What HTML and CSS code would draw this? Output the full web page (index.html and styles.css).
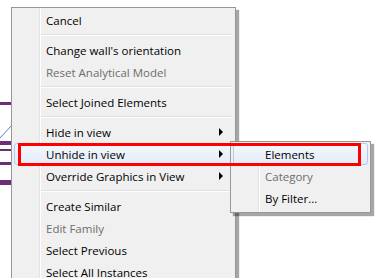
FILE: index.html
```html
<!DOCTYPE html>
<html lang="en">
  <head>
    <meta charset="utf-8" />
    <title>Context menu</title>
    <link rel="stylesheet" href="styles.css">
  </head>
  <body>
    <!-- drawing behind the menu -->
    <svg class="canvas" width="12" height="278" viewBox="0 0 12 278">
      <rect x="0" y="102" width="12" height="3" fill="#6e2d79" />
      <line x1="0" y1="138" x2="12" y2="125" stroke="#4a86d8" stroke-width="1" />
      <rect x="0" y="141" width="12" height="4" fill="#6e2d79" />
      <rect x="0" y="149" width="12" height="2" fill="#6e2d79" />
      <rect x="0" y="162" width="12" height="3" fill="#6e2d79" />
      <rect x="0" y="180" width="12" height="5" fill="#6e2d79" />
    </svg>

    <!-- main context menu -->
    <div class="menu main-menu">
      <div class="item">Cancel</div>
      <div class="sep"></div>
      <div class="item">Change wall's orientation</div>
      <div class="item disabled">Reset Analytical Model</div>
      <div class="sep"></div>
      <div class="item">Select Joined Elements</div>
      <div class="sep"></div>
      <div class="item">Hide in view <span class="arrow"></span></div>
      <div class="item active">Unhide in view <span class="arrow"></span></div>
      <div class="item">Override Graphics in View <span class="arrow"></span></div>
      <div class="sep"></div>
      <div class="item">Create Similar</div>
      <div class="item disabled">Edit Family</div>
      <div class="item">Select Previous</div>
      <div class="item">Select All Instances</div>
    </div>

    <!-- submenu for Unhide in view -->
    <div class="menu sub-menu">
      <div class="item active">Elements</div>
      <div class="item disabled">Category</div>
      <div class="item">By Filter...</div>
    </div>

    <!-- red annotation box -->
    <div class="mark"></div>
  </body>
</html>
```

FILE: styles.css
```css
* {
  box-sizing: border-box;
}

body {
  margin: 0;
  width: 385px;
  height: 278px;
  overflow: hidden;
  position: relative;
  background-color: white;
  font-family: 'Open Sans', sans-serif;
  font-size: 11.5px;
  color: black;
}

.canvas {
  position: absolute;
  left: 0;
  top: 0;
}

.menu {
  position: absolute;
  border: 1px solid #979797;
  padding: 1px 2px;
  /* gutter line for the icon column */
  background: linear-gradient(to right, #f0f0f0 27px, #e2e3e3 27px, #e2e3e3 28px, #ffffff 28px, #ffffff 29px, #f0f0f0 29px);
  background-color: #f0f0f0;
  box-shadow: 3px 3px 1px rgba(0, 0, 0, 0.35);
}

.main-menu {
  left: 11px;
  top: 7px;
  width: 225px;
}

.sub-menu {
  left: 230px;
  top: 141px;
  width: 141px;
  height: 72px;
}

.item {
  display: flex;
  align-items: center;
  height: 22px;
  padding-left: 31px;
  padding-right: 9px;
  border: 1px solid transparent;
  border-radius: 3px;
}

.item.disabled {
  color: #6d6d6d;
}

.item.active {
  border-color: #aeccf1;
  background: linear-gradient(to bottom, #f4f8fd, #e3ecf8);
}

.arrow {
  margin-left: auto;
  width: 0;
  height: 0;
  border-left: 4px solid black;
  border-top: 4px solid transparent;
  border-bottom: 4px solid transparent;
}

.sep {
  height: 2px;
  margin: 3px 1px 3px 27px;
  border-top: 1px solid #e0e0e0;
  border-bottom: 1px solid #ffffff;
}

.mark {
  position: absolute;
  left: 18px;
  top: 143px;
  width: 343px;
  height: 23px;
  border: 3px solid #ff0000;
}
```
